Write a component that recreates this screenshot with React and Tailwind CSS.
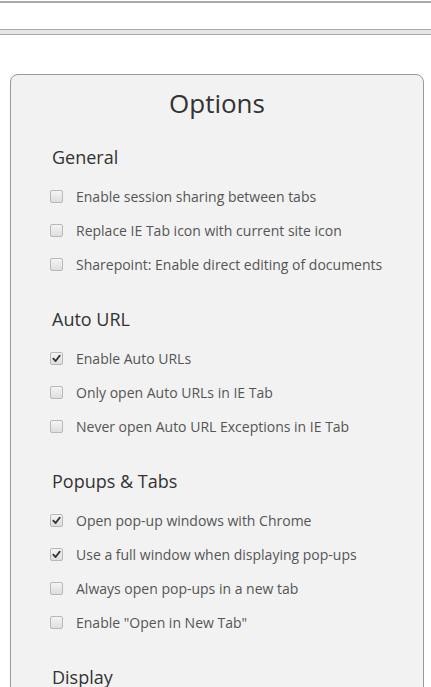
import React, { useState } from 'react';

const sections = [
  {
    title: 'General',
    items: [
      { label: 'Enable session sharing between tabs', checked: false },
      { label: 'Replace IE Tab icon with current site icon', checked: false },
      { label: 'Sharepoint: Enable direct editing of documents', checked: false },
    ],
  },
  {
    title: 'Auto URL',
    items: [
      { label: 'Enable Auto URLs', checked: true },
      { label: 'Only open Auto URLs in IE Tab', checked: false },
      { label: 'Never open Auto URL Exceptions in IE Tab', checked: false },
    ],
  },
  {
    title: 'Popups & Tabs',
    items: [
      { label: 'Open pop-up windows with Chrome', checked: true },
      { label: 'Use a full window when displaying pop-ups', checked: true },
      { label: 'Always open pop-ups in a new tab', checked: false },
      { label: 'Enable "Open in New Tab"', checked: false },
    ],
  },
  {
    title: 'Display',
    items: [],
  },
];

function Checkbox({ checked, onClick }) {
  return (
    <span
      onClick={onClick}
      className="flex h-[13px] w-[13px] shrink-0 items-center justify-center rounded-[2px] border border-[#b8b8b8] bg-gradient-to-b from-[#f4f4f4] to-[#dedede] cursor-pointer"
    >
      {checked && (
        <svg width="9" height="9" viewBox="0 0 10 10">
          <path d="M1.5 5.2 L4 7.8 L8.6 1.8" fill="none" stroke="#333" strokeWidth="2" strokeLinecap="round" strokeLinejoin="round" />
        </svg>
      )}
    </span>
  );
}

function Option({ label, checked }) {
  const [on, setOn] = useState(checked);
  return (
    <div className="-ml-[2px] flex h-[34px] items-center">
      <div className="w-[26px]">
        <Checkbox checked={on} onClick={() => setOn(!on)} />
      </div>
      <span className="text-[14px] text-[#555]">{label}</span>
    </div>
  );
}

export default function App() {
  return (
    <div className="min-h-screen bg-white font-['Open_Sans',sans-serif] overflow-hidden">
      {/* barra superior */}
      <div className="h-[28px] border-t-2 border-[#a8a8a8] mt-[1px]" />
      <div className="h-[6px] border-y border-[#a8a8a8] bg-[#e6e6e6]" />

      {/* panel de opciones */}
      <div className="mx-[10px] mt-[39px] w-[414px] rounded-[8px] border border-[#9a9a9a] bg-[#f2f2f2] pl-[41px] pt-[11px] pb-10">
        <h1 className="-ml-[41px] text-center text-[26px] leading-[34px] text-[#333]">Options</h1>
        {sections.map((s, i) => (
          <div key={s.title} className={i === 0 ? 'pt-[24px]' : 'pt-[25px]'}>
            <h2 className="h-[26px] text-[18px] leading-[26px] text-[#333]">{s.title}</h2>
            <div className="mt-[9px]">
              {s.items.map((it) => (
                <Option key={it.label} label={it.label} checked={it.checked} />
              ))}
            </div>
          </div>
        ))}
      </div>
    </div>
  );
}
